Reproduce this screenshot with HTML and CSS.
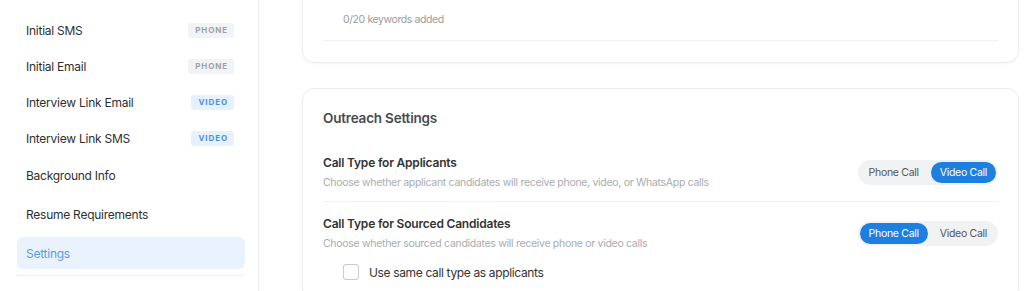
FILE: index.html
```html
<!DOCTYPE html>
<html lang="en">
<head>
    <meta charset="UTF-8">
    <meta name="viewport" content="width=device-width, initial-scale=1.0">
    <title>Job Settings</title>
    <link rel="stylesheet" href="styles.css">
</head>
<body>
    <div class="layout">
        <nav class="sidebar">
            <div class="nav-item badge-item"><span>Initial SMS</span><span class="badge badge-phone">PHONE</span></div>
            <div class="nav-item badge-item"><span>Initial Email</span><span class="badge badge-phone">PHONE</span></div>
            <div class="nav-item badge-item"><span>Interview Link Email</span><span class="badge badge-video">VIDEO</span></div>
            <div class="nav-item badge-item"><span>Interview Link SMS</span><span class="badge badge-video">VIDEO</span></div>
            <div class="nav-item"><span>Background Info</span></div>
            <div class="nav-item"><span>Resume Requirements</span></div>
            <div class="nav-item active"><span>Settings</span></div>
            <div class="nav-sep"></div>
        </nav>

        <main class="main">
            <section class="card card-top">
                <p class="keyword-count">0/20 keywords added</p>
                <div class="divider"></div>
            </section>

            <section class="card">
                <h3 class="card-title">Outreach Settings</h3>

                <div class="setting-row">
                    <div class="setting-text">
                        <div class="setting-label">Call Type for Applicants</div>
                        <div class="setting-desc">Choose whether applicant candidates will receive phone, video, or WhatsApp calls</div>
                    </div>
                    <div class="toggle">
                        <button class="toggle-btn">Phone Call</button>
                        <button class="toggle-btn on">Video Call</button>
                    </div>
                </div>

                <div class="setting-row last">
                    <div class="setting-text">
                        <div class="setting-label">Call Type for Sourced Candidates</div>
                        <div class="setting-desc">Choose whether sourced candidates will receive phone or video calls</div>
                    </div>
                    <div class="toggle">
                        <button class="toggle-btn on">Phone Call</button>
                        <button class="toggle-btn">Video Call</button>
                    </div>
                </div>

                <label class="check-row">
                    <span class="checkbox"></span>
                    <span>Use same call type as applicants</span>
                </label>
            </section>
        </main>
    </div>
</body>
</html>
```

FILE: styles.css
```css
body {
    margin: 0;
    font-family: Inter, "Noto Sans", sans-serif;
    color: #2f2f2f;
    background: #fff;
    overflow: hidden;
}
.layout {
    display: flex;
    height: 291px;
}
.sidebar {
    width: 228px;
    flex-shrink: 0;
    padding: 15px 13px 0 17px;
    border-right: 1px solid #efefef;
}
.nav-item {
    display: flex;
    align-items: center;
    justify-content: space-between;
    height: 32px;
    padding: 0 11px 0 9px;
    margin-bottom: 7px;
    border-radius: 6px;
    font-size: 12px;
    letter-spacing: -0.25px;
}
.badge-item {
    height: 30px;
    margin-bottom: 6px;
}
.nav-item.active {
    background: #eaf3fd;
    color: #5a9be3;
}
.nav-sep {
    height: 1px;
    background: #efefef;
    margin-top: -1px;
}
.badge {
    font-size: 8px;
    font-weight: 700;
    letter-spacing: 0.9px;
    padding: 0 6px 0 7px;
    height: 15px;
    line-height: 15px;
    border-radius: 3px;
}
.badge-phone {
    background: #f2f3f5;
    color: #9da1a7;
}
.badge-video {
    background: #e6f1fc;
    color: #4a90e2;
}
.main {
    flex: 1;
    padding: 0 5px 0 43px;
}
.card {
    border: 1px solid #ececec;
    border-radius: 12px;
    padding: 19px 20px 20px;
    margin-bottom: 25px;
    box-shadow: 0 1px 2px rgba(0, 0, 0, 0.04);
}
.card-top {
    margin-top: -30px;
    padding-top: 41px;
    padding-bottom: 21px;
}
.keyword-count {
    margin: 0 0 12px 20px;
    font-size: 10.5px;
    line-height: 16px;
    color: #9b9b9b;
    letter-spacing: -0.4px;
}
.divider {
    height: 1px;
    background: #f0f0f0;
}
.card-title {
    margin: 0 0 13px;
    font-size: 13.5px;
    line-height: 20px;
    font-weight: 600;
    color: #474a4f;
    letter-spacing: -0.2px;
}
.setting-row {
    display: flex;
    align-items: center;
    justify-content: space-between;
    padding: 13px 0 10px;
    border-bottom: 1px solid #f0f0f0;
}
.setting-row.last {
    border-bottom: none;
    padding-bottom: 0;
}
.setting-label {
    font-size: 12px;
    line-height: 18px;
    font-weight: 600;
    color: #333;
    letter-spacing: -0.2px;
}
.setting-desc {
    margin-top: 3px;
    font-size: 10.5px;
    line-height: 16px;
    color: #a9acb1;
    letter-spacing: -0.3px;
}
.toggle {
    display: flex;
    gap: 3px;
    padding: 2px 2px;
    background: #f1f2f4;
    border-radius: 13px;
}
.toggle-btn {
    font-family: inherit;
    font-size: 10.5px;
    height: 21px;
    padding: 0 9px;
    border: none;
    border-radius: 11px;
    background: transparent;
    color: #555;
    letter-spacing: -0.3px;
}
.toggle-btn.on {
    background: #1d7fdf;
    color: #fff;
}
.check-row {
    display: flex;
    align-items: center;
    gap: 10px;
    margin: 12px 0 0 20px;
    font-size: 12px;
    color: #333;
    letter-spacing: -0.35px;
}
.checkbox {
    width: 14px;
    height: 14px;
    border: 1px solid #c9c9c9;
    border-radius: 3px;
    background: #fff;
}
```
